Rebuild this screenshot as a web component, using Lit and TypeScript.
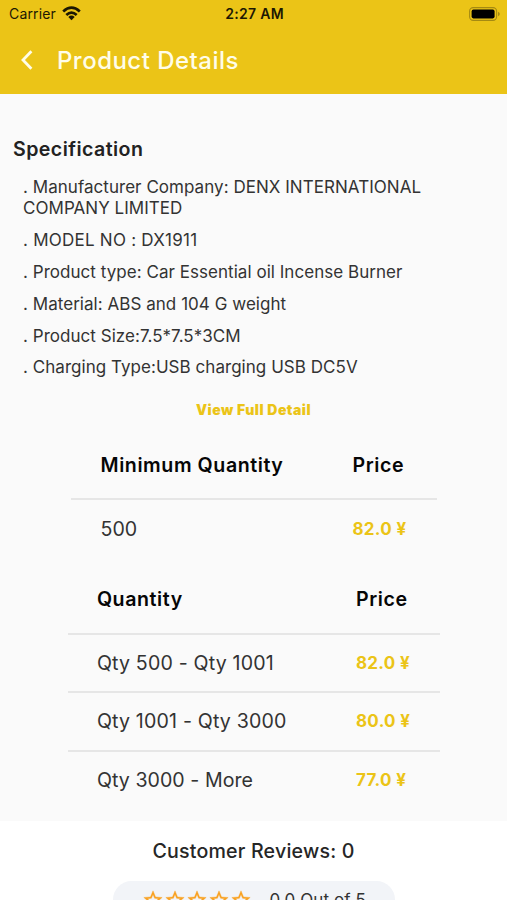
import { LitElement, html, css } from "lit";
import { customElement } from "lit/decorators.js";

interface PriceRow {
  quantity: string;
  price: string;
}

const SPECIFICATIONS = [
  "Manufacturer Company: DENX INTERNATIONAL COMPANY LIMITED",
  "MODEL NO : DX1911",
  "Product type: Car Essential oil Incense Burner",
  "Material: ABS and 104 G weight",
  "Product Size:7.5*7.5*3CM",
  "Charging Type:USB charging USB DC5V",
];

const MINIMUM: PriceRow[] = [{ quantity: "500", price: "82.0 ¥" }];

const TIERS: PriceRow[] = [
  { quantity: "Qty 500 - Qty 1001", price: "82.0 ¥" },
  { quantity: "Qty 1001 - Qty 3000", price: "80.0 ¥" },
  { quantity: "Qty 3000 - More", price: "77.0 ¥" },
];

@customElement("app-root")
export class AppRoot extends LitElement {
  static styles = css`
    :host {
      display: block;
      height: 900px;
      overflow: hidden;
      background: #fafafa;
      color: #333;
      font-family: Inter, "Liberation Sans", sans-serif;
    }
    * {
      box-sizing: border-box;
    }
    svg {
      display: block;
    }
    .top {
      height: 94px;
      background: #ebc417;
    }
    .status {
      display: grid;
      grid-template-columns: 1fr auto 1fr;
      align-items: center;
      height: 27px;
      padding: 0 7px 0 9px;
      font-size: 14px;
      line-height: 27px;
      color: #1c1803;
    }
    .carrier {
      display: flex;
      align-items: center;
      gap: 6px;
      letter-spacing: 0.15px;
    }
    .clock {
      font-weight: 600;
      letter-spacing: 0.3px;
    }
    .battery {
      justify-self: end;
    }
    .bar {
      display: flex;
      align-items: center;
      height: 66px;
      padding-left: 19px;
    }
    .title {
      margin-left: 22px;
      color: #fffde9;
      font-size: 24px;
      font-weight: 500;
      letter-spacing: 0.47px;
    }
    .body {
      display: flex;
      flex-direction: column;
      height: 727px;
      padding-top: 42px;
    }
    .heading {
      margin: 0;
      padding-left: 13px;
      font-size: 19.6px;
      font-weight: 600;
      line-height: 26px;
      letter-spacing: 0.43px;
      color: #222;
    }
    .specs {
      display: flex;
      flex-direction: column;
      gap: 10.8px;
      margin: 15.4px 60px 0 23px;
      padding: 0;
      list-style: none;
      font-size: 17px;
      line-height: 21px;
      letter-spacing: 0.04px;
    }
    .specs li:nth-child(2) {
      letter-spacing: 0.24px;
    }
    .more {
      align-self: center;
      margin-top: 21.6px;
      font-size: 14px;
      font-weight: 900;
      line-height: 20px;
      letter-spacing: 0.48px;
      color: #ebc417;
    }
    .table {
      align-self: center;
      display: grid;
    }
    .minimum {
      width: 366px;
      margin-top: 10px;
      --price-column: 84px;
    }
    .minimum .row {
      padding-left: 30px;
    }
    .tiers {
      width: 372px;
      margin-top: 7px;
      --price-column: 83.5px;
    }
    .row {
      display: grid;
      grid-template-columns: 1fr var(--price-column);
      align-items: center;
      height: 58.6px;
      padding-left: 29.4px;
      border-top: 2px solid #e6e6e6;
      font-size: 19.6px;
      letter-spacing: 0.17px;
    }
    .row:last-child {
      letter-spacing: 0.05px;
    }
    .row.head {
      height: 68.5px;
      padding-top: 2px;
      border-top: 0;
      font-weight: 600;
      letter-spacing: 0.57px;
      color: #060606;
    }
    .price {
      font-size: 17px;
      font-weight: 700;
      letter-spacing: 0.3px;
      color: #ebc417;
    }
    .reviews {
      display: flex;
      flex-direction: column;
      align-items: center;
      height: 79px;
      padding-top: 17px;
      overflow: hidden;
      background: #fff;
    }
    .count {
      margin: 0;
      font-size: 19.6px;
      font-weight: 550;
      line-height: 26px;
      letter-spacing: 0.2px;
      color: #262626;
    }
    .rating {
      display: flex;
      flex: none;
      align-items: center;
      width: 282px;
      height: 37px;
      margin-top: 17px;
      padding-left: 29px;
      border-radius: 18.5px;
      background: #f2f4f8;
      font-size: 17px;
      letter-spacing: 0.1px;
    }
    .stars {
      display: flex;
      margin-right: 18px;
    }
  `;

  private wifi() {
    return html`<svg width="19" height="15" viewBox="0 0 19 15">
      <g fill="none" stroke="#1c1803" stroke-width="2.7">
        <path d="M1.2 5.4Q9.5-2.2 17.8 5.4" />
        <path d="M4.3 8.9Q9.5 4.2 14.7 8.9" />
      </g>
      <path d="M6.3 11Q9.5 8.2 12.7 11L9.5 14.3Z" fill="#1c1803" />
    </svg>`;
  }

  private battery() {
    return html`<svg class="battery" width="31" height="14" viewBox="0 0 31 14">
      <rect x="0.6" y="0.6" width="27" height="12.8" rx="3.6" fill="none" stroke="#a58a12" stroke-width="1.1" />
      <rect x="2.6" y="2.6" width="23" height="8.8" rx="1.8" fill="#000" />
      <path d="M29 4.8Q30.8 5.6 30.8 7T29 9.2Z" fill="#a58a12" />
    </svg>`;
  }

  private star() {
    return html`<svg width="22" height="22" viewBox="0 0 24 24">
      <path
        fill="#f9a01f"
        stroke="#f9a01f"
        stroke-width="0.4"
        d="M22 9.24l-7.19-.62L12 2 9.19 8.63 2 9.24l5.46 4.73L5.82 21 12 17.27 18.18 21l-1.63-7.03L22 9.24zM12 15.4l-3.76 2.27 1-4.28-3.32-2.88 4.38-.38L12 6.1l1.71 4.04 4.38.38-3.32 2.88 1 4.28L12 15.4z"
      />
    </svg>`;
  }

  private table(kind: string, label: string, rows: PriceRow[]) {
    return html`<div class="table ${kind}">
      <div class="row head"><span>${label}</span><span>Price</span></div>
      ${rows.map(
        (r) => html`<div class="row"><span>${r.quantity}</span><span class="price">${r.price}</span></div>`
      )}
    </div>`;
  }

  render() {
    return html`
      <header class="top">
        <div class="status">
          <div class="carrier"><span>Carrier</span>${this.wifi()}</div>
          <span class="clock">2:27 AM</span>
          ${this.battery()}
        </div>
        <div class="bar">
          <svg width="16" height="22" viewBox="0 0 16 22">
            <path d="M12.4 2.2L4 11L12.4 19.8" fill="none" stroke="#fffde9" stroke-width="2.8" />
          </svg>
          <span class="title">Product Details</span>
        </div>
      </header>
      <main class="body">
        <h2 class="heading">Specification</h2>
        <ul class="specs">
          ${SPECIFICATIONS.map((s) => html`<li>${`. ${s}`}</li>`)}
        </ul>
        <span class="more">View Full Detail</span>
        ${this.table("minimum", "Minimum Quantity", MINIMUM)}
        ${this.table("tiers", "Quantity", TIERS)}
      </main>
      <section class="reviews">
        <h2 class="count">Customer Reviews: 0</h2>
        <div class="rating">
          <div class="stars">${[1, 2, 3, 4, 5].map(() => this.star())}</div>
          <span>0.0 Out of 5</span>
        </div>
      </section>
    `;
  }
}
